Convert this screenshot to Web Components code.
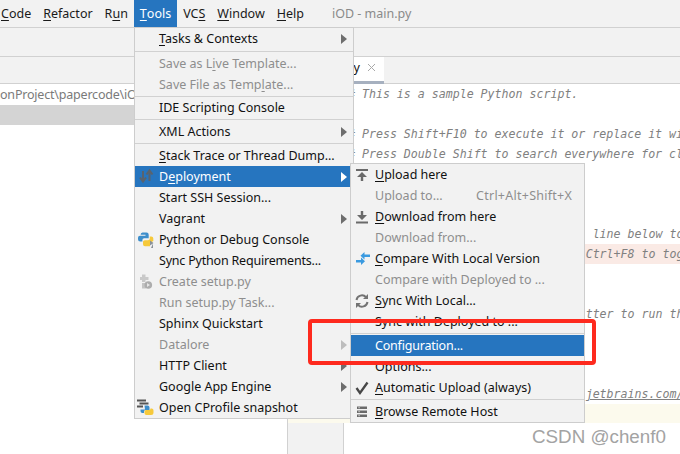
<!DOCTYPE html>
<html>
<head>
<meta charset="utf-8">
<title>iOD - main.py</title>
<style>
  html, body { margin: 0; padding: 0; }
  body { width: 680px; height: 454px; overflow: hidden; background: #fff; }
</style>
</head>
<body>
<ide-window></ide-window>

<script>
const UI_FONT = `12.5px "Noto Sans", "Open Sans", sans-serif`;

// Icons are hand-drawn on a 20x20 box, centred in the menu row's icon column.
const svg = (body) => `<svg width="20" height="20" viewBox="0 0 20 20">${body}</svg>`;
const ICONS = {
  deploy: svg(`<path d="M7 4v10M4 10.500L7 14.500l3-4" fill="none" stroke="#59636e" stroke-width="2"/><path d="M13.500 14V4M10.500 7.500l3-4 3 4" fill="none" stroke="#59636e" stroke-width="2"/>`),
  python: svg(`<path d="M6.500 2.500h4a2.200 2.200 0 0 1 2.200 2.200V8.200H8.200a1.800 1.800 0 0 0-1.800 1.800v1.500H4.200A2.200 2.200 0 0 1 2 9.300V7.700a2 2 0 0 1 2-2h5.500v-1H4.600a2.200 2.200 0 0 1 1.900-2.200z" fill="#3d8ecb"/><path d="M13.800 6.500h1.500a2 2 0 0 1 2 2v2.600l-3.300 2v3.200H9a2 2 0 0 1-2-2v-2.500a1.800 1.800 0 0 1 1.800-1.600h3.200a1.800 1.800 0 0 0 1.800-1.800z" fill="#f6c93b"/><path d="M14 10.500l3.500 2.500-3.500 2.500zM17 13.500v4.500h-2z" fill="#8a9299"/>`),
  setup: svg(`<path d="M6 2.500h3.500v2.500h3v3H9.500v2H6v-2H4V5h2z" fill="#c9c9c9"/><path d="M6 11h4v5.500H6z" fill="#c4c4c4"/><circle cx="12.300" cy="13" r="3.800" fill="#adadad"/><path d="M11 11l3 2-3 2z" fill="#e6e6e6"/>`),
  profile: svg(`<path d="M1 1.500h9v2H1zM3.500 4.500h9v2h-9zM1 7.500h6v2H1z" fill="#555"/><path d="M8.500 7.500h3a2 2 0 0 1 2 2V12H9.500a1.500 1.500 0 0 0-1.500 1.500V15H6a2 2 0 0 1-1.500-2v-1.500h4.500z" fill="#3d8ecb"/><path d="M14.500 10.500H16a2 2 0 0 1 1.500 2v2a2.500 2.500 0 0 1-2.500 2.500h-5a2 2 0 0 1-1.500-2v-1.500a1.500 1.500 0 0 1 1.500-1.500h3a1.500 1.500 0 0 0 1.500-1.500z" fill="#f6c93b"/>`),
  upload: svg(`<path d="M4 4h12v2H4z" fill="#6a6a6a"/><path d="M10 7l5 5h-3.800v4H8.800v-4H5z" fill="#6a6a6a"/>`),
  download: svg(`<path d="M4 14.500h12v2H4z" fill="#6a6a6a"/><path d="M10 13l-5-5h3.800V4h2.400v4H15z" fill="#6a6a6a"/>`),
  compare: svg(`<path d="M18 5.500h-5.500V3L8.500 6.700l4 3.800V8H18z" fill="#3a9ae0"/><path d="M4 11h5V8.500l4 3.700L9 16v-2.500H4z" fill="#3a9ae0"/>`),
  sync: svg(`<path d="M4.500 9a5.500 5.500 0 0 1 9.500-2.800M15.500 11a5.500 5.500 0 0 1-9.500 2.800" fill="none" stroke="#737373" stroke-width="2"/><path d="M16 3v5h-5zM4 17v-5h5z" fill="#737373"/>`),
  check: svg(`<path d="M4.500 10l3.500 5 7.500-10.500" fill="none" stroke="#474747" stroke-width="2.300"/>`),
  server: svg(`<path d="M5 4.500h10v2.500H5zM5 8.500h10V11H5zM5 12.500h10V15H5z" fill="#6a6a6a"/><path d="M6.500 5.200h1.200v1.100H6.500zM6.500 9.200h1.200v1.100H6.500zM6.500 13.200h1.200v1.100H6.500z" fill="#f2f2f2"/>`),
};

class MenuBar extends HTMLElement {
  constructor() {
    super();
    this.attachShadow({ mode: "open" });
    this.shadowRoot.innerHTML = `
      <style>
        :host { display: flex; align-items: stretch; height: 28px; box-sizing: border-box;
          background: #f2f2f2; border-bottom: 1px solid #d1d1d1;
          font: ${UI_FONT}; color: #1a1a1a; }
        span { display: flex; align-items: center; padding: 0 6px; white-space: pre; }
        u { text-underline-offset: 2px; }
        .first { padding-left: 1px; }
        .active { background: #2675bf; color: #fff; }
        .title { color: #8a8a8a; margin-left: 16px; }
      </style>
      <span class="first"><u>C</u>ode</span>
      <span><u>R</u>efactor</span>
      <span>R<u>u</u>n</span>
      <span class="active"><u>T</u>ools</span>
      <span>VC<u>S</u></span>
      <span><u>W</u>indow</span>
      <span><u>H</u>elp</span>
      <span class="title">iOD - main.py</span>`;
  }
}

// One menu row: attributes icon and shortcut, flags disabled / selected / arrow.
class MenuItem extends HTMLElement {
  constructor() {
    super();
    this.attachShadow({ mode: "open" });
  }
  connectedCallback() {
    const icon = ICONS[this.getAttribute("icon")] || "";
    const shortcut = this.getAttribute("shortcut");
    const arrow = this.hasAttribute("arrow");
    this.shadowRoot.innerHTML = `
      <style>
        :host { display: flex; align-items: center; height: 21px; padding-left: 24px;
          color: #111; position: relative; white-space: nowrap; }
        :host([disabled]) { color: #8e8e8e; }
        :host([selected]) { background: #2675bf; color: #fff; }
        :host([tight]) { letter-spacing: -0.2px; }
        .icon { position: absolute; left: 1px; top: 1px; width: 20px; height: 20px; }
        .shortcut { margin-left: auto; padding-right: 12px; color: #8e8e8e; letter-spacing: 0.25px; }
        .arrow { position: absolute; right: 6px; top: 5.500px; width: 0; height: 0;
          border-left: 6px solid #6e6e6e; border-top: 5px solid transparent; border-bottom: 5px solid transparent; }
        :host([disabled]) .arrow { border-left-color: #bdbdbd; }
        :host([selected]) .arrow { border-left-color: #fff; }
        ::slotted(u) { text-underline-offset: 2px; }
      </style>
      <span class="icon">${icon}</span>
      <span><slot></slot></span>
      ${shortcut ? `<span class="shortcut">${shortcut}</span>` : ""}
      ${arrow ? `<span class="arrow"></span>` : ""}`;
  }
}

// Separator row; "gap" is the whole height it takes up, the line sits in its middle.
class MenuSep extends HTMLElement {
  constructor() {
    super();
    this.attachShadow({ mode: "open" });
    this.shadowRoot.innerHTML = `
      <style>
        :host { display: flex; flex-direction: column; justify-content: center; height: 3px; }
        div { height: 1px; background: #d1d1d1; }
      </style><div></div>`;
  }
  connectedCallback() {
    this.style.height = (this.getAttribute("gap") || 3) + "px";
  }
}

class PopupMenu extends HTMLElement {
  constructor() {
    super();
    this.attachShadow({ mode: "open" });
    this.shadowRoot.innerHTML = `
      <style>
        :host { display: block; position: absolute; box-sizing: border-box; background: #f2f2f2;
          border: 1px solid #cdcdcd; font: ${UI_FONT}; }
      </style>
      <slot></slot>`;
  }
}

// [column, text]: only what shows beside the menus, the rest of a line lies under them.
const SOURCE = [
  [0, "# This is a sample Python script."],
  [0, ""],
  [0, "# Press Shift+F10 to execute it or replace it with your code."],
  [0, "# Press Double Shift to search everywhere for classes, files."],
  [0, ""],
  [0, ""],
  [0, ""],
  [35, "line below to debug your script."],
  [34, "Ctrl+F8 to toggle the breakpoint."],
  [0, ""],
  [0, ""],
  [34, "tter to run the script."],
  [0, ""],
  [0, ""],
  [0, ""],
  [34, "jetbrains.com/help/pycharm/"],
  [0, ""],
];

class CodeEditor extends HTMLElement {
  constructor() {
    super();
    this.attachShadow({ mode: "open" });
    const lines = SOURCE.map(([col, text], i) => {
      const cls = i === 8 ? "line bp" : i === 16 ? "line cur" : "line";
      const html = text.replace(/(jetbrains\S+)/, "<u>$1</u>");
      // 60px blank gutter plus 7px per column of the monospace font
      return `<div class="${cls}"><span class="txt" style="margin-left:${60 + col * 6.99}px">${html}</span></div>`;
    }).join("");
    this.shadowRoot.innerHTML = `
      <style>
        :host { display: block; flex: 1; min-width: 0; overflow: hidden; background: #fff;
          border-left: 1px solid #d1d1d1; }
        .tabs { display: flex; height: 27px; box-sizing: border-box; background: #f2f2f2;
          border-bottom: 1px solid #d1d1d1; }
        .tab { display: flex; align-items: center; justify-content: flex-end; gap: 7px;
          width: 96px; box-sizing: border-box; padding: 0 8px 3px 0; background: #fff;
          border-bottom: 3px solid #a6b0bf; height: 27px;
          font: ${UI_FONT}; color: #111; }
        .code { position: relative; background:
          linear-gradient(to right, #f2f2f2 55px, #d1d1d1 55px, #d1d1d1 56px, #fff 56px);
          height: 370px; }
        .line { display: flex; height: 20px; font: italic 11.6px/20px "DejaVu Sans Mono", monospace; color: #808080; }
        .txt { white-space: pre; }
        .bp { background: linear-gradient(to right, transparent 56px, #faeae5 56px); }
        .cur { height: 19px; background: #fcfaed; }
      </style>
      <div class="tabs"><div class="tab"><span>y</span>
        <svg width="9" height="9" viewBox="0 0 9 9"><path d="M1 1l7 7M8 1L1 8" stroke="#a9a9a9" stroke-width="1" fill="none"/></svg>
      </div></div>
      <div class="code">${lines}</div>`;
  }
}

class IdeWindow extends HTMLElement {
  constructor() {
    super();
    this.attachShadow({ mode: "open" });
    this.shadowRoot.innerHTML = `
      <style>
        :host { display: block; width: 680px; height: 454px; position: relative; overflow: hidden; background: #f2f2f2; }
        .nav { height: 29px; box-sizing: border-box; border-bottom: 1px solid #d1d1d1; }
        .main { display: flex; height: 397px; }
        .left { width: 287px; background: #fff; }
        .head { height: 27px; box-sizing: border-box; background: #f2f2f2; border-bottom: 1px solid #d1d1d1; }
        .path { width: 134px; height: 21px; display: flex; align-items: center; white-space: nowrap; overflow: hidden;
          font: ${UI_FONT}; letter-spacing: -0.2px; color: #7a7a7a; }
        .sel { height: 20px; background: #d4d4d4; }
        .mark { position: absolute; left: 308px; top: 319px; width: 288px; height: 46px; box-sizing: border-box;
          border: 4px solid #fe2a1e; border-radius: 4px; }
        .wm { position: absolute; left: 532px; top: 426px; font: 18.800px "Liberation Sans", sans-serif; color: #a3a3a3; white-space: nowrap; }
      </style>
      <menu-bar></menu-bar>
      <div class="nav"></div>
      <div class="main">
        <div class="left">
          <div class="head"></div>
          <div class="path">onProject\\papercode\\iOD</div>
          <div class="sel"></div>
        </div>
        <code-editor></code-editor>
      </div>
      <popup-menu style="left:134px;top:27px;width:220px;">
        <menu-item arrow><u>T</u>asks &amp; Contexts</menu-item>
        <menu-sep gap="4"></menu-sep>
        <menu-item disabled>Save as L<u>i</u>ve Template...</menu-item>
        <menu-item disabled>Save File as Temp<u>l</u>ate...</menu-item>
        <menu-sep gap="2"></menu-sep>
        <menu-item>IDE Scripting Console</menu-item>
        <menu-sep gap="3"></menu-sep>
        <menu-item arrow>XML Actions</menu-item>
        <menu-sep gap="3"></menu-sep>
        <menu-item><u>S</u>tack Trace or Thread Dump...</menu-item>
        <menu-item selected arrow icon="deploy">D<u>e</u>ployment</menu-item>
        <menu-item>Start SSH Session...</menu-item>
        <menu-item arrow>Vagrant</menu-item>
        <menu-item icon="python">Python or Debug Console</menu-item>
        <menu-item tight>Sync Python Requirements...</menu-item>
        <menu-item disabled icon="setup">Create setup.py</menu-item>
        <menu-item disabled>Run setup.py Task...</menu-item>
        <menu-item>Sphinx Quickstart</menu-item>
        <menu-item disabled arrow>Datalore</menu-item>
        <menu-item arrow>HTTP Client</menu-item>
        <menu-item arrow>Google App Engine</menu-item>
        <menu-item icon="profile">Open CProfile snapshot</menu-item>
      </popup-menu>
      <popup-menu style="left:350px;top:163px;width:235px;">
        <menu-item icon="upload"><u>U</u>pload here</menu-item>
        <menu-item disabled shortcut="Ctrl+Alt+Shift+X">Upload to...</menu-item>
        <menu-item icon="download"><u>D</u>ownload from here</menu-item>
        <menu-item disabled>Download from...</menu-item>
        <menu-item icon="compare"><u>C</u>ompare With Local Version</menu-item>
        <menu-item disabled>Compare with Deployed to ...</menu-item>
        <menu-item icon="sync"><u>S</u>ync With Local...</menu-item>
        <menu-item>Sync with Deployed to ...</menu-item>
        <menu-sep gap="3"></menu-sep>
        <menu-item selected tight>Configuration...</menu-item>
        <menu-item>Options...</menu-item>
        <menu-item icon="check"><u>A</u>utomatic Upload (always)</menu-item>
        <menu-sep gap="3"></menu-sep>
        <menu-item icon="server"><u>B</u>rowse Remote Host</menu-item>
      </popup-menu>
      <div class="mark"></div>
      <div class="wm">CSDN @chenf0</div>`;
  }
}

customElements.define("menu-bar", MenuBar);
customElements.define("menu-item", MenuItem);
customElements.define("menu-sep", MenuSep);
customElements.define("popup-menu", PopupMenu);
customElements.define("code-editor", CodeEditor);
customElements.define("ide-window", IdeWindow);
</script>
</body>
</html>
